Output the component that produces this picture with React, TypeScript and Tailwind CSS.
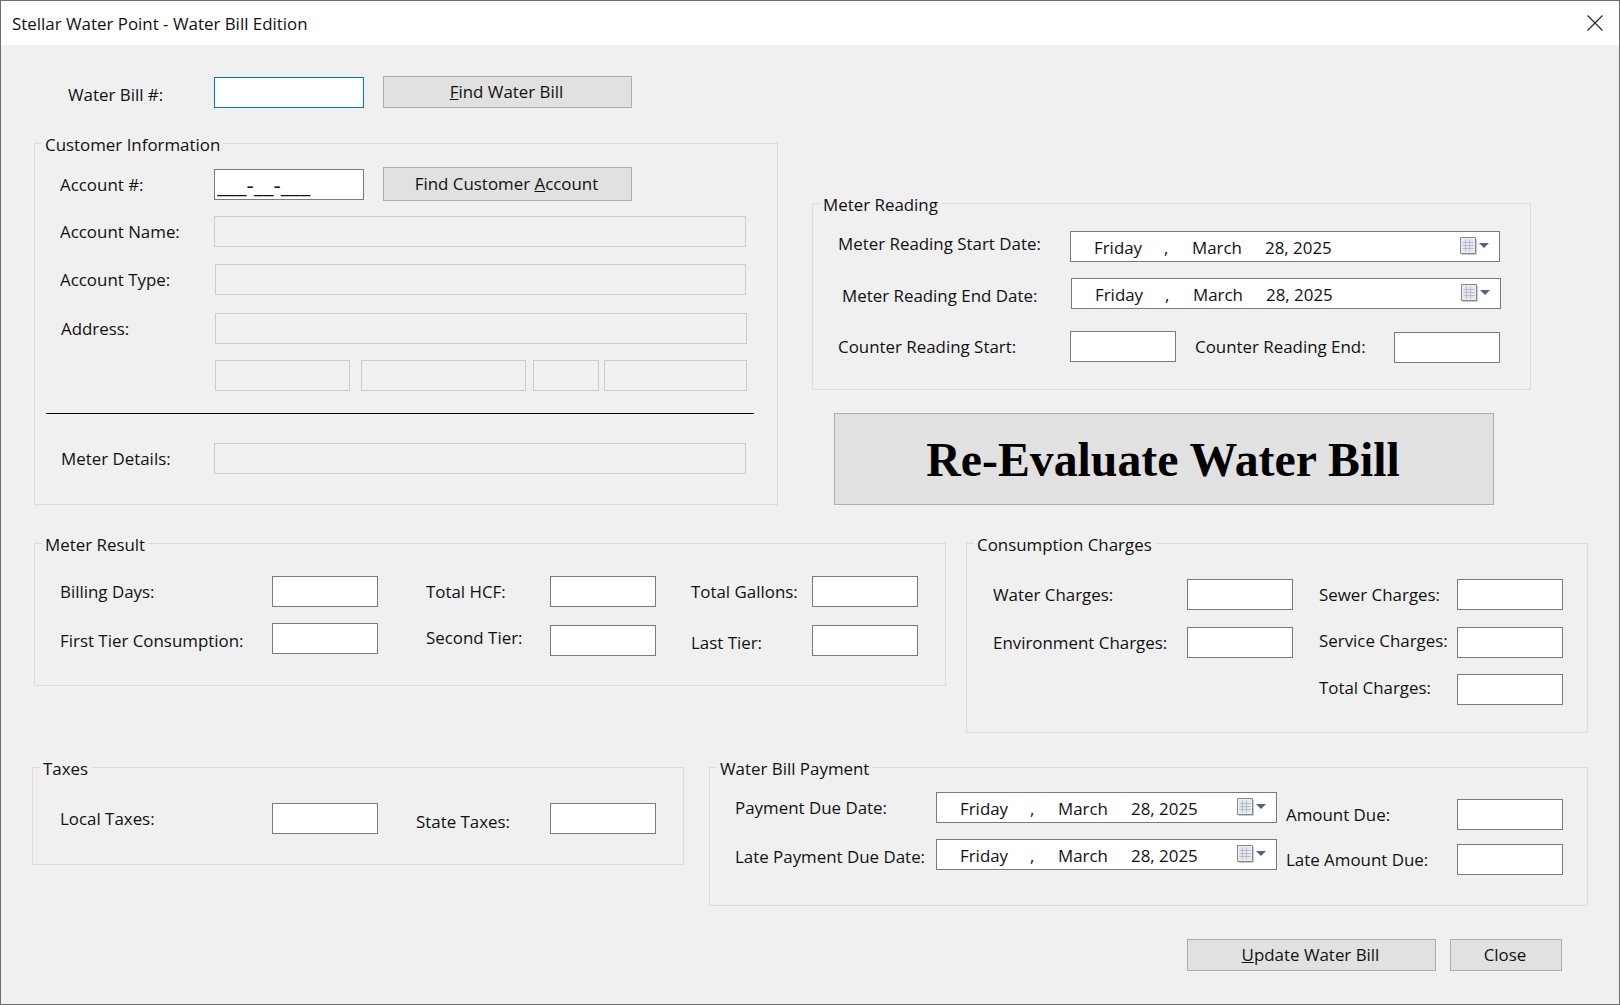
import React from "react";

const Label = ({ className, children }: { className: string; children: React.ReactNode }) => (
    <div className={`absolute -translate-y-1/2 whitespace-nowrap leading-6 text-[#111] ${className}`}>{children}</div>
);

const Box = ({ className }: { className: string }) => (
    <input readOnly className={`absolute box-border bg-white border border-[#7a7a7a] outline-none ${className}`} />
);

const Disabled = ({ className }: { className: string }) => (
    <input disabled className={`absolute box-border bg-[#f0f0f0] border border-[#cccccc] outline-none ${className}`} />
);

const Btn = ({ className, children }: { className: string; children: React.ReactNode }) => (
    <button className={`absolute box-border flex items-center justify-center pr-[2px] bg-[#e1e1e1] border border-[#adadad] text-[#111] ${className}`}>{children}</button>
);

const Group = ({ className, title }: { className: string; title: string }) => (
    <div className={`absolute box-border border border-[#dcdcdc] ${className}`}>
        <span className="absolute top-[-11px] left-[7px] h-[22px] px-[3px] bg-[#f0f0f0] leading-6 whitespace-nowrap text-[#111]">{title}</span>
    </div>
);

const CalendarIcon = () => (
    <svg width="30" height="19" viewBox="0 0 30 19" className="absolute top-0 left-0">
        <path d="M1.5 17.5H16.5V2" fill="none" stroke="#c9c9c9" />
        <path d="M0.5 0.5H15.5V16.5H0.5Z" fill="#eef1f6" stroke="#8b8784" />
        <path d="M2 1.5H14.5V15.5H2Z" fill="#e4e8ef" />
        <path d="M2.5 5.5H13.5M2.5 8.5H13.5M2.5 11.5H13.5M5.5 2.5V14.5M9.5 2.5V14.5" fill="none" stroke="#b4bccb" />
        <path d="M19 6H29L24 11Z" fill="#4e6285" />
    </svg>
);

const DatePick = ({ className }: { className: string }) => (
    <div className={`absolute box-border bg-white border border-[#7a7a7a] text-[#111] leading-6 ${className}`}>
        <span className="absolute left-[23px] top-[4px]">Friday</span>
        <span className="absolute left-[93px] top-[4px]">,</span>
        <span className="absolute left-[121px] top-[4px]">March</span>
        <span className="absolute left-[194px] top-[4px]">28, 2025</span>
        <div className="absolute right-[9px] top-[5px] w-[30px] h-[19px]">
            <CalendarIcon />
        </div>
    </div>
);

export default function App() {
    return (
        <div className="relative w-[1620px] h-[1005px] overflow-hidden bg-[#f0f0f0] font-[Open_Sans,sans-serif] text-[16.9px]">
            {/* title bar */}
            <div className="absolute left-0 top-0 w-full h-[45px] bg-white">
                <span className="absolute left-[12px] top-[12px] leading-6 text-[#111] whitespace-nowrap">Stellar Water Point - Water Bill Edition</span>
                <svg width="16" height="16" viewBox="0 0 16 16" className="absolute left-[1587px] top-[15px]">
                    <path d="M0.5 0.5L15.5 15.5M15.5 0.5L0.5 15.5" stroke="#222" strokeWidth="1.1" fill="none" />
                </svg>
            </div>

            <Label className="left-[68px] top-[95px]">Water Bill #:</Label>
            <input readOnly className="absolute box-border left-[214px] top-[77px] w-[150px] h-[31px] bg-white border border-[#0078d7] outline-none" />
            <Btn className="left-[383px] top-[76px] w-[249px] h-[32px]"><span><u>F</u>ind Water Bill</span></Btn>

            {/* customer information */}
            <Group className="left-[34px] top-[143px] w-[744px] h-[362px]" title="Customer Information" />
            <Label className="left-[60px] top-[185px]">Account #:</Label>
            <input readOnly value="___-__-___" className="absolute box-border left-[214px] top-[169px] w-[150px] h-[31px] px-[2px] bg-white border border-[#7a7a7a] outline-none text-[#111] text-[22.5px]" />
            <Btn className="left-[383px] top-[167px] w-[249px] h-[34px]"><span>Find Customer <u>A</u>ccount</span></Btn>

            <Label className="left-[60px] top-[232px]">Account Name:</Label>
            <Disabled className="left-[214px] top-[216px] w-[532px] h-[31px]" />
            <Label className="left-[60px] top-[280px]">Account Type:</Label>
            <Disabled className="left-[215px] top-[264px] w-[531px] h-[31px]" />
            <Label className="left-[61px] top-[329px]">Address:</Label>
            <Disabled className="left-[215px] top-[313px] w-[532px] h-[31px]" />
            <Disabled className="left-[215px] top-[360px] w-[135px] h-[31px]" />
            <Disabled className="left-[361px] top-[360px] w-[165px] h-[31px]" />
            <Disabled className="left-[533px] top-[360px] w-[66px] h-[31px]" />
            <Disabled className="left-[604px] top-[360px] w-[143px] h-[31px]" />
            <div className="absolute left-[46px] top-[413px] w-[708px] h-px bg-black" />
            <Label className="left-[61px] top-[459px]">Meter Details:</Label>
            <Disabled className="left-[214px] top-[443px] w-[532px] h-[31px]" />

            {/* meter reading */}
            <Group className="left-[812px] top-[203px] w-[719px] h-[187px]" title="Meter Reading" />
            <Label className="left-[838px] top-[244px]">Meter Reading Start Date:</Label>
            <DatePick className="left-[1070px] top-[231px] w-[430px] h-[31px]" />
            <Label className="left-[842px] top-[296px]">Meter Reading End Date:</Label>
            <DatePick className="left-[1071px] top-[278px] w-[430px] h-[31px]" />
            <Label className="left-[838px] top-[347px]">Counter Reading Start:</Label>
            <Box className="left-[1070px] top-[331px] w-[106px] h-[31px]" />
            <Label className="left-[1195px] top-[347px]">Counter Reading End:</Label>
            <Box className="left-[1394px] top-[332px] w-[106px] h-[31px]" />

            <Btn className="left-[834px] top-[413px] w-[660px] h-[92px] pt-[2px] font-[Liberation_Serif,serif] font-bold text-[47.8px]"><span className="text-black">Re-Evaluate Water Bill</span></Btn>

            {/* meter result */}
            <Group className="left-[34px] top-[543px] w-[912px] h-[143px]" title="Meter Result" />
            <Label className="left-[60px] top-[592px]">Billing Days:</Label>
            <Box className="left-[272px] top-[576px] w-[106px] h-[31px]" />
            <Label className="left-[426px] top-[592px]">Total HCF:</Label>
            <Box className="left-[550px] top-[576px] w-[106px] h-[31px]" />
            <Label className="left-[691px] top-[592px]">Total Gallons:</Label>
            <Box className="left-[812px] top-[576px] w-[106px] h-[31px]" />
            <Label className="left-[60px] top-[641px]">First Tier Consumption:</Label>
            <Box className="left-[272px] top-[623px] w-[106px] h-[31px]" />
            <Label className="left-[426px] top-[638px]">Second Tier:</Label>
            <Box className="left-[550px] top-[625px] w-[106px] h-[31px]" />
            <Label className="left-[691px] top-[643px]">Last Tier:</Label>
            <Box className="left-[812px] top-[625px] w-[106px] h-[31px]" />

            {/* consumption charges */}
            <Group className="left-[966px] top-[543px] w-[622px] h-[190px]" title="Consumption Charges" />
            <Label className="left-[993px] top-[595px]">Water Charges:</Label>
            <Box className="left-[1187px] top-[579px] w-[106px] h-[31px]" />
            <Label className="left-[1319px] top-[595px]">Sewer Charges:</Label>
            <Box className="left-[1457px] top-[579px] w-[106px] h-[31px]" />
            <Label className="left-[993px] top-[643px]">Environment Charges:</Label>
            <Box className="left-[1187px] top-[627px] w-[106px] h-[31px]" />
            <Label className="left-[1319px] top-[641px]">Service Charges:</Label>
            <Box className="left-[1457px] top-[627px] w-[106px] h-[31px]" />
            <Label className="left-[1319px] top-[688px]">Total Charges:</Label>
            <Box className="left-[1457px] top-[674px] w-[106px] h-[31px]" />

            {/* taxes */}
            <Group className="left-[32px] top-[767px] w-[652px] h-[98px]" title="Taxes" />
            <Label className="left-[60px] top-[819px]">Local Taxes:</Label>
            <Box className="left-[272px] top-[803px] w-[106px] h-[31px]" />
            <Label className="left-[416px] top-[822px]">State Taxes:</Label>
            <Box className="left-[550px] top-[803px] w-[106px] h-[31px]" />

            {/* water bill payment */}
            <Group className="left-[709px] top-[767px] w-[879px] h-[139px]" title="Water Bill Payment" />
            <Label className="left-[735px] top-[808px]">Payment Due Date:</Label>
            <DatePick className="left-[936px] top-[792px] w-[341px] h-[31px]" />
            <Label className="left-[735px] top-[857px]">Late Payment Due Date:</Label>
            <DatePick className="left-[936px] top-[839px] w-[341px] h-[31px]" />
            <Label className="left-[1286px] top-[815px]">Amount Due:</Label>
            <Box className="left-[1457px] top-[799px] w-[106px] h-[31px]" />
            <Label className="left-[1286px] top-[860px]">Late Amount Due:</Label>
            <Box className="left-[1457px] top-[844px] w-[106px] h-[31px]" />

            <Btn className="left-[1187px] top-[939px] w-[249px] h-[32px]"><span><u>U</u>pdate Water Bill</span></Btn>
            <Btn className="left-[1450px] top-[939px] w-[112px] h-[32px]">Close</Btn>

            {/* window frame */}
            <div className="absolute inset-0 border border-[#6e6e6e] pointer-events-none" />
        </div>
    );
}
